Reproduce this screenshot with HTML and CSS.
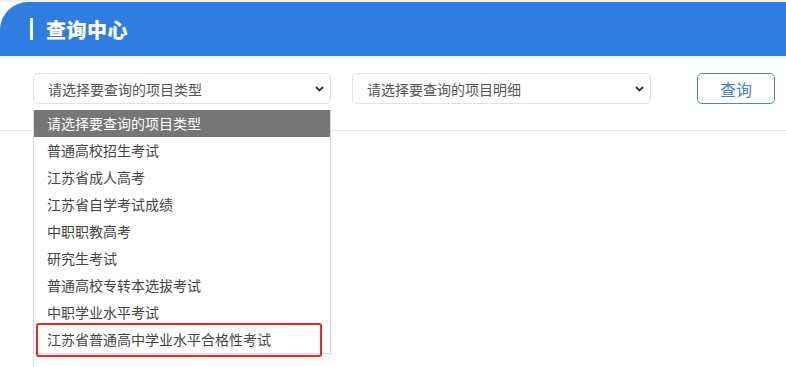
FILE: index.html
```html
<!DOCTYPE html>
<html lang="zh-CN">
<head>
  <meta charset="UTF-8" />
  <meta name="viewport" content="width=device-width, initial-scale=1.0"/>
  <title>查询中心</title>
  <link rel="stylesheet" href="styles.css">
</head>
<body>

  <header class="title-bar">
    <span class="title-mark"></span>
    <h1>查询中心</h1>
  </header>

  <div class="toolbar">
    <div class="select-wrap">
      <div class="select">
        <span>请选择要查询的项目类型</span>
        <svg class="chevron" width="9" height="6" viewBox="0 0 9 6"><path d="M1 1l3.5 3.5L8 1" fill="none" stroke="#333" stroke-width="1.8"/></svg>
      </div>
      <ul class="options">
        <li class="active">请选择要查询的项目类型</li>
        <li>普通高校招生考试</li>
        <li>江苏省成人高考</li>
        <li>江苏省自学考试成绩</li>
        <li>中职职教高考</li>
        <li>研究生考试</li>
        <li>普通高校专转本选拔考试</li>
        <li>中职学业水平考试</li>
        <li class="marked">江苏省普通高中学业水平合格性考试</li>
      </ul>
    </div>
    <div class="select select-detail">
      <span>请选择要查询的项目明细</span>
      <svg class="chevron" width="9" height="6" viewBox="0 0 9 6"><path d="M1 1l3.5 3.5L8 1" fill="none" stroke="#333" stroke-width="1.8"/></svg>
    </div>
    <button class="btn-query">查询</button>
  </div>

  <div class="content">
    <div class="panel"></div>
  </div>

</body>
</html>
```

FILE: styles.css
```css
:root {
  --brand-blue: #2f7de0;
  --line-grey: #e6e6e6;
  --text-dark: #444;
}

body {
  font-family: "Microsoft YaHei", "Noto Sans CJK SC", sans-serif;
  background-color: #fff;
  color: var(--text-dark);
  margin: 0;
  padding: 0;
  border-top: 2px solid #f0f0f0;
}

.title-bar {
  background-color: var(--brand-blue);
  height: 54px;
  border-top-left-radius: 28px;
  display: flex;
  align-items: center;
  padding-left: 30px;
  box-shadow: 0 2px 3px rgba(230, 220, 190, 0.5);
}

.title-mark {
  width: 3px;
  height: 22px;
  background-color: #fff;
  margin-right: 13px;
}

.title-bar h1 {
  margin: 0;
  font-size: 20px;
  font-weight: 900;
  color: #fff;
  letter-spacing: 0.5px;
}

.toolbar {
  display: flex;
  align-items: flex-start;
  padding: 17px 0 0 33px;
  height: 57px;
  border-bottom: 1px solid var(--line-grey);
}

.select-wrap {
  position: relative;
}

.select {
  width: 298px;
  height: 31px;
  box-sizing: border-box;
  border: 1px solid #e2e2e2;
  border-radius: 5px;
  display: flex;
  align-items: center;
  justify-content: space-between;
  padding: 0 6px 0 14px;
  font-size: 14px;
  color: #555;
}

.select-detail {
  width: 299px;
  margin-left: 21px;
}

.chevron {
  display: block;
}

.btn-query {
  margin-left: 46px;
  width: 78px;
  height: 31px;
  border: 1px solid #4d84cc;
  border-radius: 5px;
  background-color: #fff;
  color: #4a80c6;
  font-family: inherit;
  font-size: 16px;
  padding: 0;
}

.options {
  position: absolute;
  top: 37px;
  left: 0;
  width: 298px;
  box-sizing: border-box;
  margin: 0;
  padding: 0;
  list-style: none;
  background-color: #fff;
  border: 1px solid #d8d8d8;
  border-top: none;
  z-index: 2;
}

.options li {
  height: 27px;
  line-height: 27px;
  padding-left: 13px;
  font-size: 14px;
  color: var(--text-dark);
  white-space: nowrap;
}

.options li.active {
  background-color: #767676;
  color: #fff;
}

.options li.marked {
  position: relative;
}

/* red annotation frame drawn over the last option */
.options li.marked::after {
  content: "";
  position: absolute;
  top: -3px;
  left: 2px;
  right: 8px;
  bottom: -4px;
  border: 2px solid #e8262c;
  border-radius: 3px;
}

.content {
  padding-left: 33px;
}

.panel {
  height: 240px;
  border-left: 1px solid #e0e0e0;
}
```
